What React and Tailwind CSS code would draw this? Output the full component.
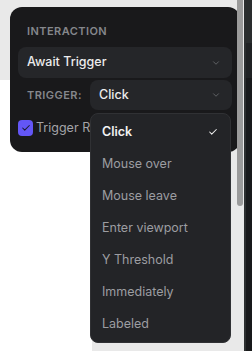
import { ChevronDown, Check } from 'lucide-react';

const options = ['Click', 'Mouse over', 'Mouse leave', 'Enter viewport', 'Y Threshold', 'Immediately', 'Labeled'];

const App = () => {
  return (
    <div className="relative flex w-[252px] h-[351px] overflow-hidden bg-[#e9e9e9] font-['Inter',sans-serif]">
      <div className="relative w-[244px] h-full">
        {/* white page area under the gray header band */}
        <div className="absolute left-0 top-[80px] w-[92px] h-[271px] bg-white"></div>

        <div className="relative ml-[10px] mt-[7px] w-[230px] h-[145px] rounded-[12px] bg-[#19191b] px-2 pt-[17px]">
          <div className="pl-[9px] h-[14px] leading-[14px] text-[11px] font-semibold tracking-[0.04em] text-[#85878c] mb-[9px]">
            INTERACTION
          </div>
          <div className="flex items-center justify-between h-[31px] rounded-[8px] bg-[#252629] pl-[9px] pr-[11px]">
            <span className="text-[12.5px] font-medium text-[#ececec]">Await Trigger</span>
            <ChevronDown size={10} strokeWidth={2} className="text-[#6a6c70]" />
          </div>
          <div className="flex items-center mt-[2px] h-[30px]">
            <span className="w-[72px] pl-[9px] text-[11px] font-semibold tracking-[0.04em] text-[#85878c]">TRIGGER:</span>
            <div className="flex-1 flex items-center justify-between h-[30px] rounded-[8px] bg-[#252629] pl-[9px] pr-[11px]">
              <span className="text-[12.5px] font-medium text-[#ececec]">Click</span>
              <ChevronDown size={10} strokeWidth={2} className="text-[#6a6c70]" />
            </div>
          </div>
          <div className="flex items-center gap-[3px] mt-[9px]">
            <div className="flex items-center justify-center w-[15px] h-[16px] rounded-[4px] bg-[#6356f6]">
              <Check size={10} strokeWidth={2.5} className="text-[#1b1b2e]" />
            </div>
            <span className="text-[12.5px] text-[#a4a4a8]">Trigger Re</span>
          </div>
        </div>

        {/* open select menu */}
        <div className="absolute left-[90px] top-[113px] w-[141px] h-[230px] rounded-[8px] border border-[#303134] bg-[#232427] pt-[2px]">
          {options.map((o, i) => (
            <div key={o} className="flex items-center justify-between h-[32px] pl-[11px] pr-[12px]">
              <span className={i === 0 ? 'text-[12.5px] font-semibold text-[#f2f2f2]' : 'text-[12.5px] text-[#9c9da1]'}>{o}</span>
              {i === 0 && <Check size={10} strokeWidth={2.5} className="text-[#eeeeee]" />}
            </div>
          ))}
        </div>

        {/* scrollbar thumb */}
        <div className="absolute left-[237px] top-0 w-[6px] h-[206px] rounded-b-[3px] bg-[#9b9b9b]"></div>
      </div>

      <div className="flex flex-col w-[8px] h-full border-l-2 border-[#2c2f30] bg-[#18191b]">
        <div className="h-[43px] bg-[#2a2d2e]"></div>
        <div className="h-[35px] bg-[#202224]"></div>
      </div>
    </div>
  );
};

export default App;
